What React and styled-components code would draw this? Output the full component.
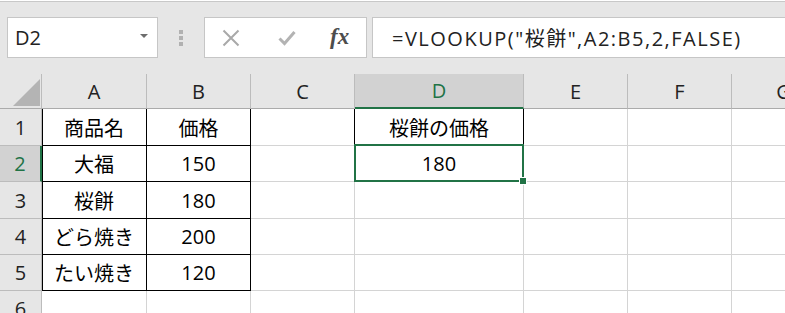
import React from 'react';
import styled, { createGlobalStyle } from 'styled-components';

const GlobalStyle = createGlobalStyle`
  html, body {
    margin: 0;
    padding: 0;
    background: #ffffff;
    overflow: hidden;
  }
  body {
    font-family: "Open Sans", "Noto Sans CJK JP", sans-serif;
  }
`;

const GREEN = '#217346';

const Page = styled.div`
  width: 785px;
  height: 313px;
  overflow: hidden;
`;

const Toolbar = styled.div`
  display: flex;
  margin-top: 1px;
  border-top: 1px solid #c8c8c8;
  background: #e6e6e6;
  padding: 15px 0 16px 7px;
`;

const NameBox = styled.div`
  box-sizing: border-box;
  width: 151px;
  height: 41px;
  display: flex;
  align-items: center;
  justify-content: space-between;
  padding: 0 9px 0 7px;
  background: #fff;
  border: 1px solid #c6c6c6;
  color: #222;
  font-size: 20px;
`;

const DropArrow = styled.span`
  width: 0;
  height: 0;
  border-left: 4px solid transparent;
  border-right: 4px solid transparent;
  border-top: 4px solid #6d6d6d;
  margin-top: -3px;
`;

const Grip = styled.div`
  width: 46px;
  display: flex;
  flex-direction: column;
  align-items: center;
  justify-content: center;
  gap: 2px;
`;

const Dot = styled.span`
  width: 4px;
  height: 4px;
  background: #b1b1b1;
`;

const FxBox = styled.div`
  box-sizing: border-box;
  width: 163px;
  height: 41px;
  display: flex;
  align-items: center;
  padding-left: 17px;
  background: #fff;
  border: 1px solid #c6c6c6;
`;

const IconSlot = styled.span`
  display: flex;
  margin-right: ${p => p.$gap}px;
`;

const FxText = styled.span`
  font-family: "Liberation Serif", "DejaVu Serif", serif;
  font-style: italic;
  font-weight: 700;
  font-size: 23px;
  color: #4d4d4d;
  margin-top: -2px;
`;

const FormulaBox = styled.div`
  box-sizing: border-box;
  flex: 1;
  height: 41px;
  margin-left: 5px;
  display: flex;
  align-items: center;
  padding-left: 19px;
  background: #fff;
  border: 1px solid #c6c6c6;
  border-right: none;
  color: #222;
  font-size: 20px;
  letter-spacing: 1.5px;
  white-space: nowrap;
`;

const Sheet = styled.div`
  display: grid;
  grid-template-columns: 42px 105px 104px 104px 169px 104px 104px 104px;
  grid-template-rows: 35px 37px 36px 37px 36px 36px 36px;
`;

const Corner = styled.div`
  box-sizing: border-box;
  background: #e6e6e6;
  border-right: 1px solid #bcbcbc;
  border-bottom: 1px solid #ababab;
  display: flex;
  align-items: flex-end;
  justify-content: flex-end;
  padding: 0 1px 2px 0;
`;

const CornerMark = styled.span`
  width: 27px;
  height: 27px;
  background: #b4b4b4;
  clip-path: polygon(100% 0, 100% 100%, 0 100%);
`;

const ColHeader = styled.div`
  box-sizing: border-box;
  display: flex;
  align-items: center;
  justify-content: center;
  font-size: 20px;
  background: ${p => (p.$active ? '#d2d2d2' : '#e6e6e6')};
  color: ${p => (p.$active ? GREEN : '#222')};
  border-right: 1px solid #bcbcbc;
  border-bottom: ${p => (p.$active ? `2px solid ${GREEN}` : '1px solid #ababab')};
`;

const RowHeader = styled.div`
  box-sizing: border-box;
  display: flex;
  align-items: center;
  justify-content: center;
  font-size: 20px;
  background: ${p => (p.$active ? '#d2d2d2' : '#e6e6e6')};
  color: ${p => (p.$active ? GREEN : '#222')};
  border-right: ${p => (p.$active ? `2px solid ${GREEN}` : '1px solid #bcbcbc')};
  border-bottom: 1px solid #bcbcbc;
`;

const Cell = styled.div`
  box-sizing: border-box;
  position: ${p => (p.$selected ? 'relative' : 'static')};
  display: flex;
  align-items: center;
  justify-content: center;
  font-size: 20px;
  color: #000;
  white-space: nowrap;
  border-right: 1px solid ${p => p.$r};
  border-bottom: 1px solid ${p => p.$b};
  box-shadow: ${p => (p.$edge ? 'inset 1px 0 0 #000' : 'none')};

  ${p => p.$selected && `
    &::after {
      content: '';
      position: absolute;
      top: -2px;
      left: -1px;
      right: -1px;
      bottom: -1px;
      border: 2px solid ${GREEN};
      pointer-events: none;
    }
    &::before {
      content: '';
      position: absolute;
      right: -3px;
      bottom: -3px;
      width: 6px;
      height: 6px;
      background: ${GREEN};
      box-shadow: 0 0 0 1px #fff;
      z-index: 2;
    }
  `}
`;

const columns = ['A', 'B', 'C', 'D', 'E', 'F', 'G'];

const data = [
  ['商品名', '価格', '', '桜餅の価格'],
  ['大福', '150', '', '180'],
  ['桜餅', '180'],
  ['どら焼き', '200'],
  ['たい焼き', '120'],
  [],
];

const selected = { row: 1, col: 3 };

function boxed(r, c) {
  if (r < 0 || c < 0) return false;
  if (r <= 4 && c <= 1) return true;
  return r === 0 && c === 3;
}

function CrossIcon() {
  return (
    <svg width="18" height="18" viewBox="0 0 18 18">
      <path d="M1.5 1.5 L16.5 16.5 M16.5 1.5 L1.5 16.5" stroke="#a9a9a9" strokeWidth="2" fill="none" />
    </svg>
  );
}

function CheckIcon() {
  return (
    <svg width="18" height="16" viewBox="0 0 18 16">
      <path d="M1.5 8.5 L6.5 13.5 L16.5 2" stroke="#b3b3b3" strokeWidth="3" fill="none" />
    </svg>
  );
}

export default function App() {
  return (
    <Page>
      <GlobalStyle />
      <Toolbar>
        <NameBox>
          <span>D2</span>
          <DropArrow />
        </NameBox>
        <Grip>
          <Dot />
          <Dot />
          <Dot />
        </Grip>
        <FxBox>
          <IconSlot $gap={38}><CrossIcon /></IconSlot>
          <IconSlot $gap={34}><CheckIcon /></IconSlot>
          <FxText>fx</FxText>
        </FxBox>
        <FormulaBox>=VLOOKUP("桜餅",A2:B5,2,FALSE)</FormulaBox>
      </Toolbar>
      <Sheet>
        <Corner><CornerMark /></Corner>
        {columns.map((name, c) => (
          <ColHeader key={name} $active={c === selected.col}>{name}</ColHeader>
        ))}
        {data.map((row, r) => (
          <React.Fragment key={r}>
            <RowHeader $active={r === selected.row}>{r + 1}</RowHeader>
            {columns.map((name, c) => {
              const inBox = boxed(r, c);
              return (
                <Cell
                  key={name}
                  $r={inBox || boxed(r, c + 1) ? '#000' : '#d4d4d4'}
                  $b={inBox || boxed(r + 1, c) ? '#000' : '#d4d4d4'}
                  $edge={c === 0 && inBox}
                  $selected={r === selected.row && c === selected.col}
                >
                  {row[c] || ''}
                </Cell>
              );
            })}
          </React.Fragment>
        ))}
      </Sheet>
    </Page>
  );
}
